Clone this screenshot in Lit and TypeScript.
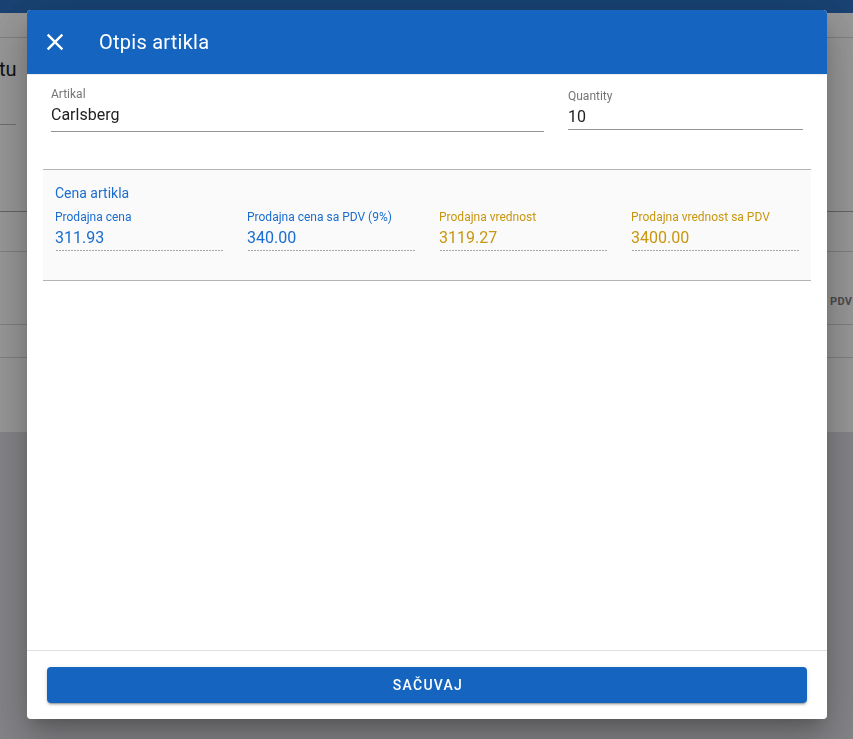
import { LitElement, css, html } from 'lit';
import { customElement } from 'lit/decorators.js';

const prices = [
  { label: 'Prodajna cena', value: '311.93', tone: 'blue' },
  { label: 'Prodajna cena sa PDV (9%)', value: '340.00', tone: 'blue' },
  { label: 'Prodajna vrednost', value: '3119.27', tone: 'gold' },
  { label: 'Prodajna vrednost sa PDV', value: '3400.00', tone: 'gold' },
];

@customElement('app-root')
export class AppRoot extends LitElement {
  static styles = css`
    :host {
      display: block;
      height: 739px;
      overflow: hidden;
      position: relative;
      font-family: Roboto, 'Liberation Sans', sans-serif;
      background: #e0e0e6;
    }

    /* page behind the modal */
    .page {
      height: 432px;
      background: #fff;
      display: flex;
      flex-direction: column;
    }
    .topbar {
      height: 13px;
      flex: none;
      background: #2c71c0;
    }
    .row {
      flex: none;
      box-sizing: border-box;
      border-bottom: 1px solid #d8d8d8;
    }
    .r1 { height: 25px; }
    .r2 {
      height: 100px;
      border: none;
      font-size: 20px;
      line-height: 24px;
      color: #222;
      padding-top: 19px;
    }
    .r2 span { display: block; margin-left: -1px; }
    .r2 i {
      display: block;
      width: 16px;
      height: 1px;
      margin-top: 43px;
      background: #bbb;
    }
    .r3 { height: 74px; border-bottom-color: #aaa; }
    .r4 { height: 40px; }
    .r5 {
      height: 73px;
      display: flex;
      justify-content: flex-end;
      align-items: center;
      padding-top: 27px;
      font-size: 11px;
      font-weight: 700;
      letter-spacing: 0.3px;
      color: #808080;
    }
    .r5 span { width: 23px; overflow: hidden; }
    .r6 { height: 33px; }

    .backdrop {
      position: absolute;
      inset: 0;
      background: rgba(0, 0, 0, 0.4);
    }

    .dialog {
      position: absolute;
      left: 27px;
      top: 10px;
      width: 800px;
      height: 709px;
      display: flex;
      flex-direction: column;
      background: #fff;
      border-radius: 4px;
      overflow: hidden;
      will-change: transform;
    }
    .shadow {
      position: absolute;
      left: 27px;
      top: 10px;
      width: 800px;
      height: 709px;
      border-radius: 4px;
      box-shadow: 0 11px 15px -7px rgba(0, 0, 0, 0.2),
        0 24px 38px 3px rgba(0, 0, 0, 0.14),
        0 9px 46px 8px rgba(0, 0, 0, 0.12);
    }

    header {
      flex: none;
      height: 64px;
      display: flex;
      align-items: center;
      padding-left: 16px;
      background: #1565c0;
      color: #fff;
      border-bottom: 1px solid #eee;
    }
    header svg { width: 28px; height: 28px; margin: 0 -2px; fill: #fff; display: block; }
    header h1 {
      margin: 0 0 0 32px;
      font-size: 20px;
      font-weight: 400;
      letter-spacing: 0.25px;
    }

    .body {
      flex: 1;
      padding: 0 16px;
    }
    .fields {
      display: flex;
      gap: 24px;
      padding: 0 8px;
    }
    .field { box-sizing: border-box; border-bottom: 1px solid #949494; }
    .artikal { flex: 1; height: 57px; padding-top: 12px; }
    .quantity { width: 235px; flex: none; height: 55px; padding-top: 14px; }
    .field label {
      display: block;
      font-size: 12px;
      line-height: 14px;
      color: #757575;
    }
    .field div {
      font-size: 16px;
      line-height: 19px;
      margin-top: 4px;
      color: #212121;
    }

    .prices {
      margin-top: 37px;
      height: 112px;
      box-sizing: border-box;
      padding: 15px 12px 0;
      background: #fafafa;
      border-top: 1px solid #b5b5b5;
      border-bottom: 1px solid #b5b5b5;
    }
    .prices h2 {
      margin: 0;
      font-size: 14px;
      line-height: 17px;
      font-weight: 400;
      color: #1a6dd0;
    }
    .grid {
      display: grid;
      grid-template-columns: repeat(4, 1fr);
      gap: 24px;
      margin-top: 8px;
    }
    .price label { display: block; font-size: 12px; line-height: 14px; }
    .price div { font-size: 16px; line-height: 19px; margin-top: 4px; }
    .price::after {
      content: '';
      display: block;
      height: 1px;
      margin: 3px 0 0 1px;
      background: repeating-linear-gradient(to right, #a5a5a5 0 2px, transparent 2px 3px);
    }
    .blue { color: #1a6dd0; }
    .gold { color: #c9960f; }

    footer {
      flex: none;
      padding: 16px 20px;
      border-top: 1px solid #e0e0e0;
    }
    button {
      display: block;
      width: 100%;
      height: 36px;
      padding: 0 0 0 2px;
      border: none;
      border-radius: 4px;
      background: #1565c0;
      color: #fff;
      font: 500 14px Roboto, 'Liberation Sans', sans-serif;
      letter-spacing: 1.25px;
      box-shadow: 0 3px 1px -2px rgba(0, 0, 0, 0.2),
        0 2px 2px 0 rgba(0, 0, 0, 0.14),
        0 1px 5px 0 rgba(0, 0, 0, 0.12);
    }
  `;

  render() {
    return html`
      <div class="page">
        <div class="topbar"></div>
        <div class="row r1"></div>
        <div class="row r2"><span>tu</span><i></i></div>
        <div class="row r3"></div>
        <div class="row r4"></div>
        <div class="row r5"><span>PDV</span></div>
        <div class="row r6"></div>
      </div>
      <div class="backdrop"></div>
      <div class="shadow"></div>
      <div class="dialog">
        <header>
          <svg viewBox="0 0 24 24">
            <path d="M19 6.41 17.59 5 12 10.59 6.41 5 5 6.41 10.59 12 5 17.59 6.41 19 12 13.41 17.59 19 19 17.59 13.41 12z"></path>
          </svg>
          <h1>Otpis artikla</h1>
        </header>
        <div class="body">
          <div class="fields">
            <div class="field artikal">
              <label>Artikal</label>
              <div>Carlsberg</div>
            </div>
            <div class="field quantity">
              <label>Quantity</label>
              <div>10</div>
            </div>
          </div>
          <section class="prices">
            <h2>Cena artikla</h2>
            <div class="grid">
              ${prices.map(
                (p) => html`
                  <div class="price ${p.tone}">
                    <label>${p.label}</label>
                    <div>${p.value}</div>
                  </div>
                `
              )}
            </div>
          </section>
        </div>
        <footer><button>SAČUVAJ</button></footer>
      </div>
    `;
  }
}
